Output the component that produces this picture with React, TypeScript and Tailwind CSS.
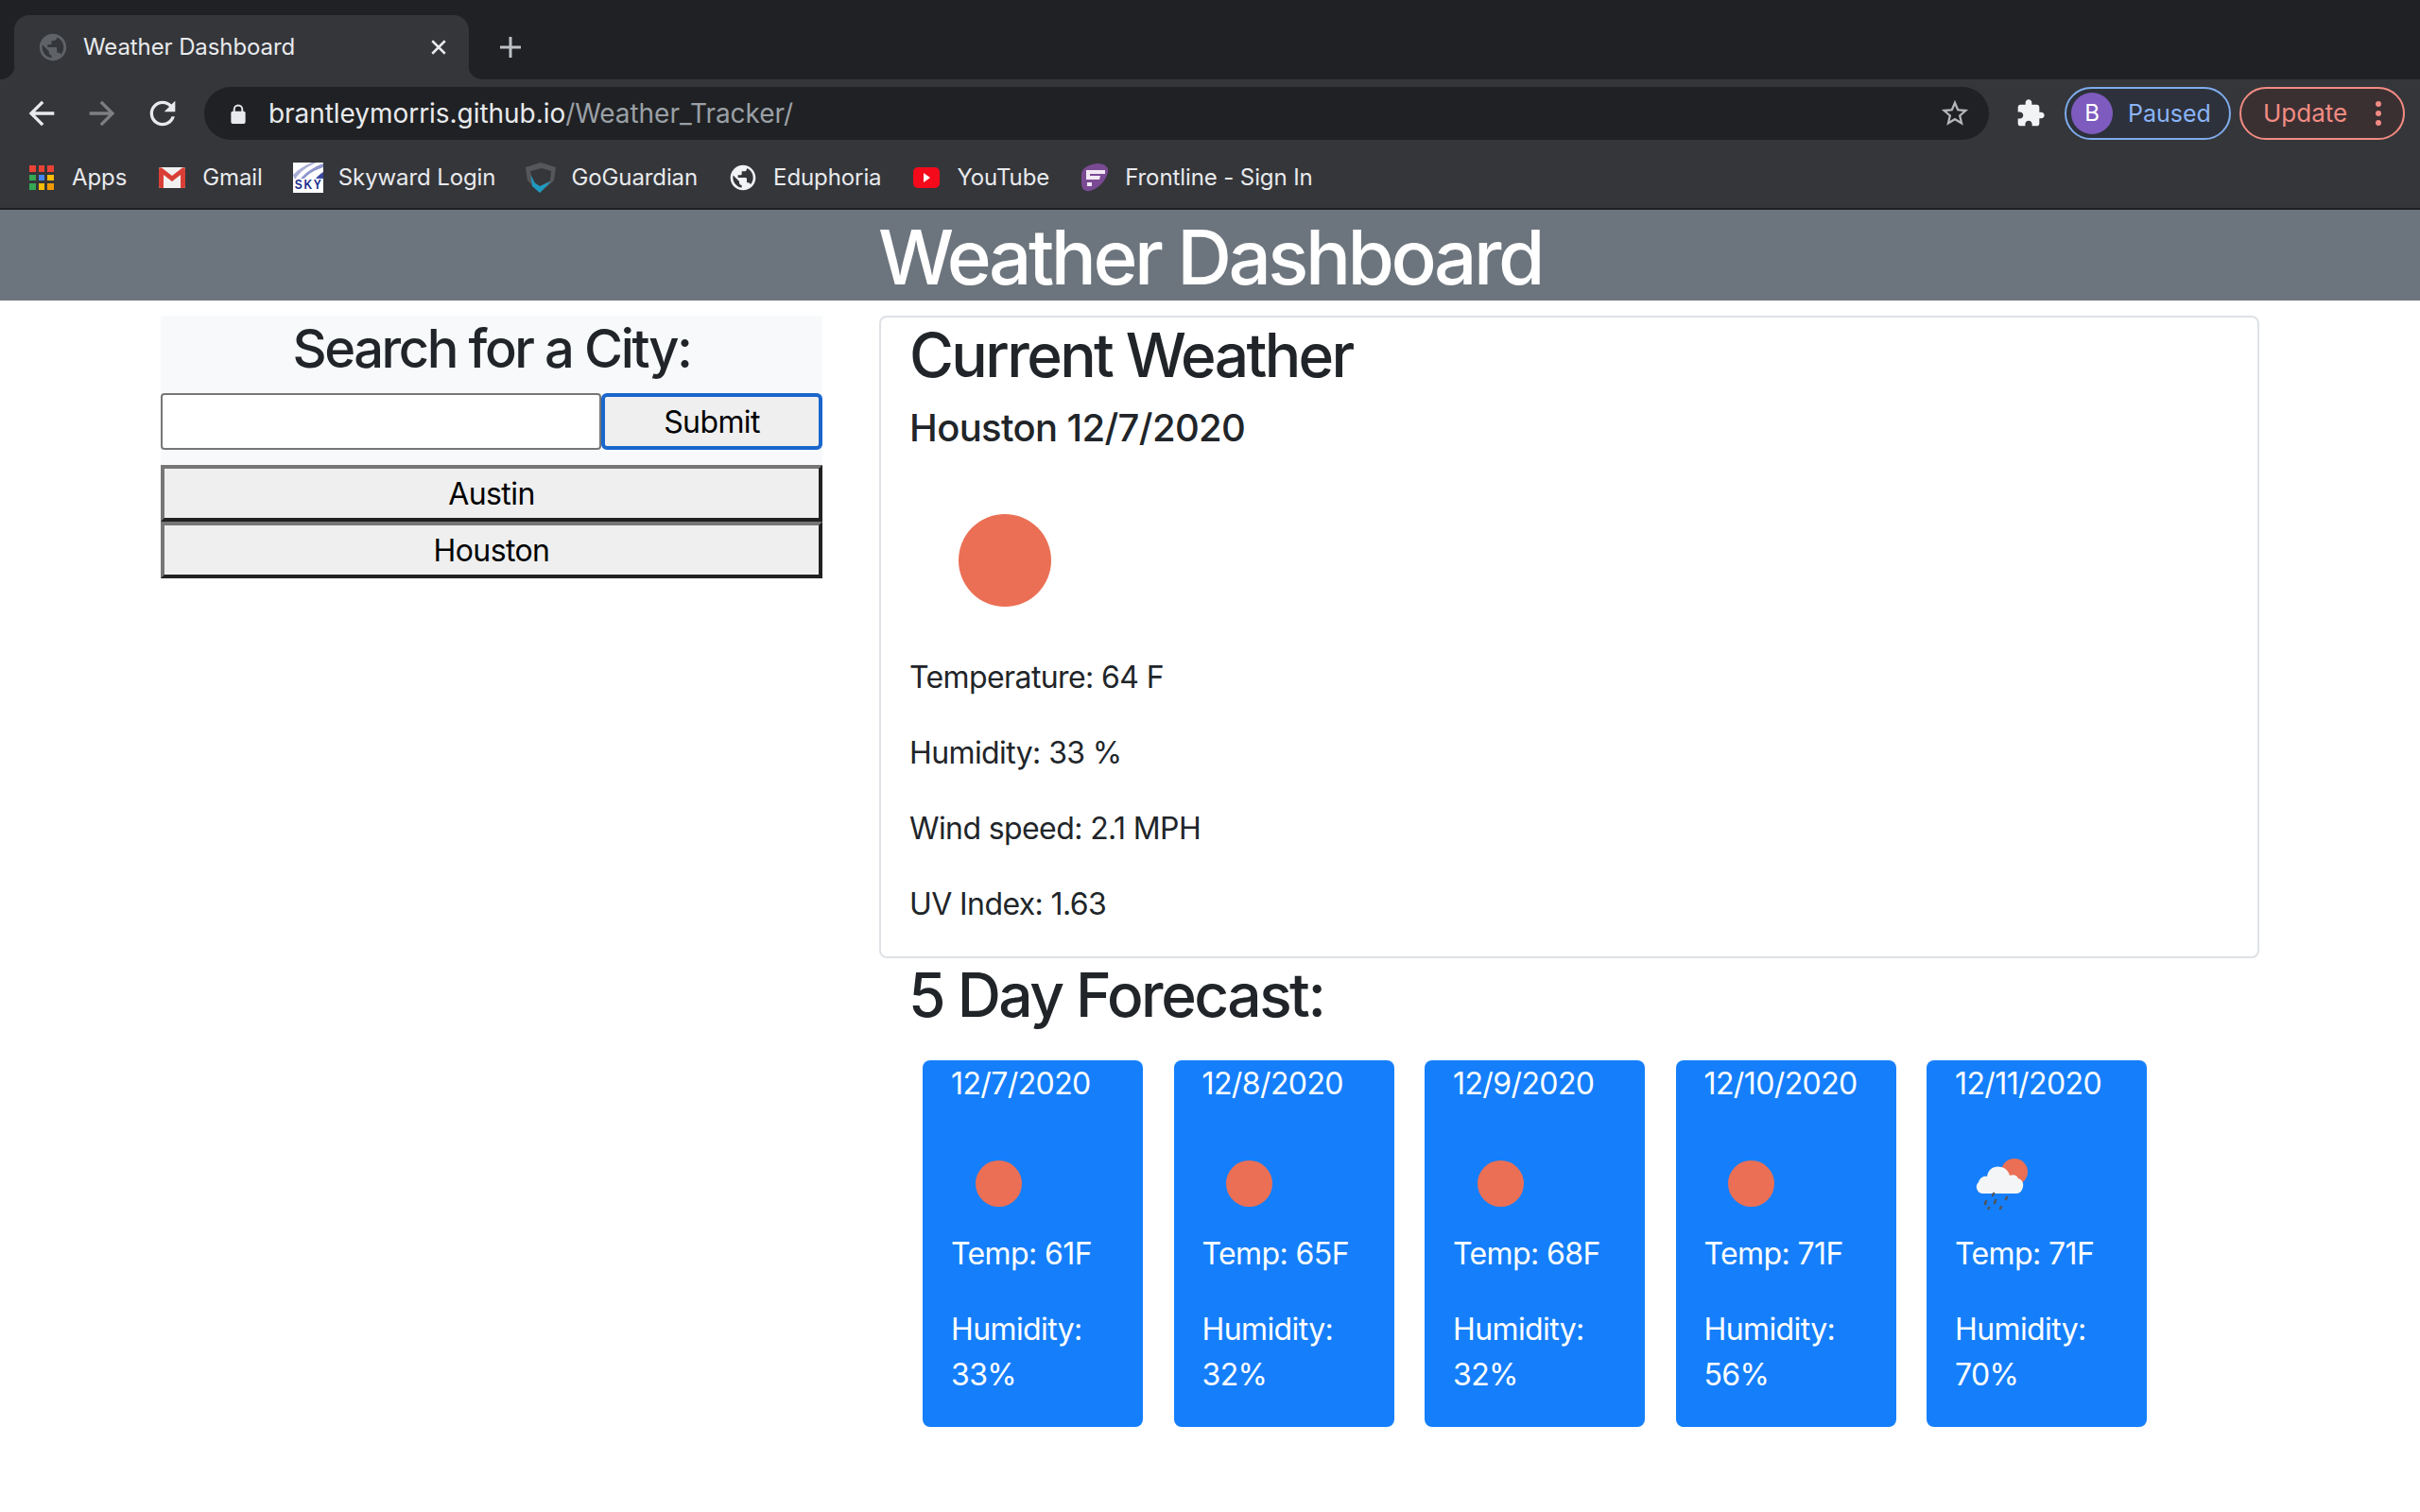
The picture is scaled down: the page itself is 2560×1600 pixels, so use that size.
import type { ReactNode } from 'react'

function MaterialIcon({ d, className }: { d: string; className: string }) {
  return (
    <svg viewBox="0 0 24 24" fill="currentColor" className={className}>
      <path d={d} />
    </svg>
  )
}

const GLOBE =
  'M12 2C6.48 2 2 6.48 2 12s4.48 10 10 10 10-4.48 10-10S17.52 2 12 2zm-1 17.93c-3.95-.49-7-3.85-7-7.93 0-.62.08-1.21.21-1.79L9 15v1c0 1.1.9 2 2 2v1.93zm6.9-2.54c-.26-.81-1-1.39-1.9-1.39h-1v-3c0-.55-.45-1-1-1H8v-2h2c.55 0 1-.45 1-1V7h2c1.1 0 2-.9 2-2v-.41c2.93 1.19 5 4.06 5 7.41 0 2.08-.8 3.97-2.1 5.39z'
const ARROW = 'M20 11H7.83l5.59-5.59L12 4l-8 8 8 8 1.41-1.41L7.83 13H20v-2z'
const RELOAD =
  'M17.65 6.35C16.2 4.9 14.21 4 12 4c-4.42 0-7.99 3.58-7.99 8s3.57 8 7.99 8c3.73 0 6.84-2.55 7.73-6h-2.08c-.82 2.33-3.04 4-5.65 4-3.31 0-6-2.69-6-6s2.69-6 6-6c1.66 0 3.14.69 4.22 1.78L13 11h7V4l-2.35 2.35z'
const STAR =
  'M22 9.24l-7.19-.62L12 2 9.19 8.63 2 9.24l5.46 4.73L5.82 21 12 17.27 18.18 21l-1.63-7.03L22 9.24zM12 15.4l-3.76 2.27 1-4.28-3.32-2.88 4.38-.38L12 6.1l1.71 4.04 4.38.38-3.32 2.88 1 4.28L12 15.4z'
const PUZZLE =
  'M20.5 11H19V7c0-1.1-.9-2-2-2h-4V3.5C13 2.12 11.88 1 10.5 1S8 2.12 8 3.5V5H4c-1.1 0-1.99.9-1.99 2v3.8H3.5c1.49 0 2.7 1.21 2.7 2.7s-1.21 2.7-2.7 2.7H2V20c0 1.1.9 2 2 2h3.8v-1.5c0-1.49 1.21-2.7 2.7-2.7 1.49 0 2.7 1.21 2.7 2.7V22H17c1.1 0 2-.9 2-2v-4h1.5c1.38 0 2.5-1.12 2.5-2.5S21.88 11 20.5 11z'

function AppsIcon() {
  const colors = ['#ea4335', '#ea4335', '#ea4335', '#34a853', '#4285f4', '#fbbc04', '#34a853', '#fbbc04', '#f29900']
  return (
    <div className="grid grid-cols-3 gap-[3px] w-[26px] h-[26px]">
      {colors.map((c, i) => (
        <span key={i} className="w-[6.6px] h-[6.6px]" style={{ backgroundColor: c }} />
      ))}
    </div>
  )
}

function GmailIcon() {
  return (
    <svg viewBox="0 0 28 22" className="w-[28px] h-[22px]">
      <rect width="28" height="22" rx="2" fill="#f1f1f1" />
      <path d="M0 2v18a2 2 0 0 0 2 2h3V8l9 7 9-7v14h3a2 2 0 0 0 2-2V2a2 2 0 0 0-3-1.5L14 9 3 .5A2 2 0 0 0 0 2z" fill="#d93f36" />
    </svg>
  )
}

function SkywardIcon() {
  return (
    <div className="relative w-[32px] h-[32px] bg-white overflow-hidden">
      <svg viewBox="0 0 32 32" className="absolute inset-0 w-full h-full">
        <path d="M0 13C6 7 12 3 20 0h5C15 4 7 10 2 18z" fill="#a9aed8" />
        <path d="M8 17C13 11 21 5 32 1v4C23 8 16 12 12 17z" fill="#8f96cc" />
        <path d="M24 17c2-3 5-5 8-7v7z" fill="#3b4aa3" />
      </svg>
      <div className="absolute bottom-0 left-0 right-0 flex justify-between px-[2px] font-[family-name:'Liberation_Sans',sans-serif] text-[12px] leading-[14px] font-bold text-[#1f2f8f] scale-y-125 origin-bottom">
        <span>S</span>
        <span>K</span>
        <span>Y</span>
      </div>
    </div>
  )
}

function GoGuardianIcon() {
  return (
    <svg viewBox="0 0 32 32" className="w-[32px] h-[32px]">
      <path d="M0 5 16 0l16 5-2 14-15 13L2 19z" fill="#55575b" />
      <path d="M5 9 17 6l10 3-1 10-11 6-8-6z" fill="#35363a" />
      <path d="M5.5 13 10 22l5 3 12-5-12 12-8-7z" fill="#1f9ac0" />
    </svg>
  )
}

function YouTubeIcon() {
  return (
    <div className="flex items-center justify-center w-[28px] h-[22px] rounded-[5px] bg-[#f40a1a]">
      <span className="w-0 h-0 border-y-[5px] border-y-transparent border-l-[7px] border-l-white" />
    </div>
  )
}

function FrontlineIcon() {
  return (
    <svg viewBox="0 0 30 30" className="w-[30px] h-[30px]">
      <path d="M1 12C1 4 9 1 18 0c8 0 12 4 11 9-2 9-9 17-19 20-6 1-9-2-9-9z" fill="#7a4a93" />
      <path d="M6 7h20v4H10v2h11l-1 4H6z" fill="#f2e9f5" />
      <rect x="7" y="20" width="5" height="4" fill="#f2e9f5" />
    </svg>
  )
}

function Bookmark({ icon, label }: { icon: ReactNode; label: string }) {
  return (
    <div className="flex items-center gap-[16px]">
      <div className="flex items-center justify-center w-[32px] h-[32px]">{icon}</div>
      <span className="text-[24px] leading-[32px] tracking-[-0.1px] text-[#e8eaed] whitespace-nowrap">{label}</span>
    </div>
  )
}

function BrowserChrome() {
  return (
    <div className="bg-[#35363a]">
      <div className="flex items-end h-[84px] pl-[15px] bg-[#202124]">
        <div className="relative flex items-center w-[481px] h-[68px] pl-[27px] pr-[24px] rounded-t-[16px] bg-[#35363a]">
          <svg viewBox="0 0 16 16" className="absolute bottom-0 -left-[15px] w-[16px] h-[16px]">
            <path d="M16 0v16H0c9 0 16-7 16-16z" fill="#35363a" />
          </svg>
          <svg viewBox="0 0 16 16" className="absolute bottom-0 -right-[15px] w-[16px] h-[16px]">
            <path d="M0 0v16h16C7 16 0 9 0 0z" fill="#35363a" />
          </svg>
          <MaterialIcon d={GLOBE} className="w-[34px] h-[34px] -ml-[3px] text-[#5f6368]" />
          <span className="ml-[15px] text-[24px] leading-[32px] tracking-[-0.1px] text-[#e8eaed] whitespace-nowrap">Weather Dashboard</span>
          <svg viewBox="0 0 16 16" className="ml-auto -mr-[1px] w-[18px] h-[18px]" stroke="#e8eaed" strokeWidth="2.2">
            <path d="M2 2l12 12M14 2 2 14" />
          </svg>
        </div>
        <svg viewBox="0 0 22 22" className="ml-[33px] mb-[23px] w-[22px] h-[22px]" stroke="#bdc1c6" strokeWidth="3">
          <path d="M11 0v22M0 11h22" />
        </svg>
      </div>
      <div className="flex items-start h-[72px] pt-[8px]">
        <div className="flex items-center w-[216px] h-[56px] pl-[24px] gap-[24px] text-[#e8eaed]">
          <MaterialIcon d={ARROW} className="w-[40px] h-[40px]" />
          <MaterialIcon d={ARROW} className="w-[40px] h-[40px] text-[#7d7f83] rotate-180" />
          <MaterialIcon d={RELOAD} className="w-[40px] h-[40px]" />
        </div>
        <div className="flex items-center w-[1888px] h-[56px] pl-[28px] pr-[19px] rounded-full bg-[#202124]">
          <svg viewBox="0 0 16 22" className="w-[16px] h-[21px]">
            <path d="M3.5 9V6a4.5 4.5 0 0 1 9 0v3" fill="none" stroke="#e8eaed" strokeWidth="2" />
            <rect y="8" width="16" height="14" rx="2" fill="#e8eaed" />
          </svg>
          <span className="ml-[24px] text-[28px] leading-[36px] tracking-[-0.05px] whitespace-nowrap text-[#e8eaed]">
            brantleymorris.github.io<span className="text-[#9aa0a6]">/Weather_Tracker/</span>
          </span>
          <MaterialIcon d={STAR} className="ml-auto w-[34px] h-[34px] text-[#b4b6b8]" />
        </div>
        <div className="flex items-center h-[56px]">
          <MaterialIcon d={PUZZLE} className="ml-[28px] w-[32px] h-[32px] text-[#f1f3f4]" />
        </div>
        <div className="flex items-center ml-[20px] w-[176px] h-[56px] pl-[5px] rounded-full border-2 border-[#7facec] bg-[#2d313b]">
          <div className="flex items-center justify-center w-[44px] h-[44px] rounded-full bg-[#7e5bbe] text-[24px] text-white">B</div>
          <span className="ml-[16px] text-[25px] leading-[32px] text-[#8ab4f8]">Paused</span>
        </div>
        <div className="flex items-center ml-[9px] w-[175px] h-[56px] pl-[23px] rounded-full border-2 border-[#f28b82] bg-[#3a3032]">
          <span className="text-[26px] leading-[32px] text-[#f28b82]">Update</span>
          <div className="flex flex-col gap-[4px] ml-[30px]">
            <span className="w-[6px] h-[6px] rounded-full bg-[#f28b82]" />
            <span className="w-[6px] h-[6px] rounded-full bg-[#f28b82]" />
            <span className="w-[6px] h-[6px] rounded-full bg-[#f28b82]" />
          </div>
        </div>
      </div>
      <div className="flex items-center gap-[32px] h-[64px] pl-[28px]">
        <Bookmark icon={<AppsIcon />} label="Apps" />
        <Bookmark icon={<GmailIcon />} label="Gmail" />
        <Bookmark icon={<SkywardIcon />} label="Skyward Login" />
        <Bookmark icon={<GoGuardianIcon />} label="GoGuardian" />
        <Bookmark icon={<MaterialIcon d={GLOBE} className="w-[34px] h-[34px] text-[#f1f3f4]" />} label="Eduphoria" />
        <Bookmark icon={<YouTubeIcon />} label="YouTube" />
        <Bookmark icon={<FrontlineIcon />} label="Frontline - Sign In" />
      </div>
      <div className="h-[2px] bg-[#202124]" />
    </div>
  )
}

function SunImage({ className }: { className: string }) {
  return (
    <div className={`flex items-center justify-center ${className}`}>
      <div className="w-[49%] h-[49%] rounded-full bg-[#eb6f54]" />
    </div>
  )
}

function RainImage() {
  return (
    <svg viewBox="0 0 100 100" className="w-[100px] h-[100px]">
      <circle cx="63" cy="38" r="14" fill="#eb6f54" />
      <path d="M29 61a7 7 0 0 1-4-12c1-4 5-7 9-6 1-8 8-12 15-10 5 1 8 5 9 9 4-2 8 0 9 3 4 1 6 5 5 9-1 4-3 7-7 7z" fill="#f4f5f6" />
      <g stroke="#4d5560" strokeWidth="2.6" strokeLinecap="round">
        <path d="M41 61l-1 2M33 69l-1 3M43 68l-1 3M55 65l-1 2M36 76l-.5 1M49 75l-1 2" />
      </g>
    </svg>
  )
}

function ForecastCard({ date, temp, humidity, rain }: { date: string; temp: string; humidity: string; rain?: boolean }) {
  return (
    <div className="w-[233px] h-[388px] pt-px px-[30px] rounded-[8px] bg-[#157ffb] text-[32px] leading-[48px] tracking-[-0.6px] text-white">
      <p className="mb-[31px] whitespace-nowrap">{date}</p>
      {rain ? <RainImage /> : <SunImage className="w-[100px] h-[100px]" />}
      <p className="mt-px mb-[32px] whitespace-nowrap">Temp: {temp}</p>
      <p>Humidity: {humidity}</p>
    </div>
  )
}

const FORECAST = [
  { date: '12/7/2020', temp: '61F', humidity: '33%' },
  { date: '12/8/2020', temp: '65F', humidity: '32%' },
  { date: '12/9/2020', temp: '68F', humidity: '32%' },
  { date: '12/10/2020', temp: '71F', humidity: '56%' },
  { date: '12/11/2020', temp: '71F', humidity: '70%', rain: true },
]

export default function App() {
  return (
    <div className="min-h-screen bg-white font-[family-name:Inter,sans-serif] text-[#212529]">
      <BrowserChrome />
      <header className="h-[96px] pt-[2px] bg-[#6c757d] text-center text-[80px] leading-[96px] tracking-[-3.5px] font-medium text-white">
        Weather Dashboard
      </header>
      <main className="flex gap-[60px] px-[170px] pt-[16px]">
        <aside className="w-[700px] shrink-0">
          <div className="h-[158px] pt-[2px] bg-[#f8f9fa]">
            <h3 className="mb-[13px] text-center text-[56px] leading-[67px] tracking-[-2.4px] font-medium">Search for a City:</h3>
            <div className="flex h-[60px]">
              <input className="w-[466px] rounded-[4px] border-2 border-[#767676] bg-white" />
              <button className="w-[234px] pt-[2px] rounded-[6px] border-4 border-[#1a66cc] bg-[#efefef] text-[32px] tracking-[-0.6px] text-black">Submit</button>
            </div>
          </div>
          <button className="block w-full h-[60px] pt-[2px] border-4 border-t-[#767676] border-l-[#767676] border-r-[#212121] border-b-[#212121] bg-[#efefef] text-[32px] tracking-[-0.6px] text-black">Austin</button>
          <button className="block w-full h-[60px] pt-[2px] border-4 border-t-[#767676] border-l-[#767676] border-r-[#212121] border-b-[#212121] bg-[#efefef] text-[32px] tracking-[-0.6px] text-black">Houston</button>
        </aside>
        <section className="flex-1 min-w-0">
          <div className="h-[680px] pt-px px-[30px] rounded-[8px] border-2 border-[#dee2e6] text-[32px] leading-[48px] tracking-[-0.6px]">
            <h2 className="mb-[15px] text-[64px] leading-[77px] tracking-[-2.6px] font-medium">Current Weather</h2>
            <h5 className="mb-[16px] text-[40px] leading-[48px] tracking-[-0.65px] font-medium">Houston 12/7/2020</h5>
            <SunImage className="ml-px w-[200px] h-[200px]" />
            <p className="mb-[32px]">Temperature: 64 F</p>
            <p className="mb-[32px]">Humidity: 33 %</p>
            <p className="mb-[32px]">Wind speed: 2.1 MPH</p>
            <p>UV Index: 1.63</p>
          </div>
          <h2 className="mb-[31px] pl-[31px] text-[64px] leading-[77px] tracking-[-2.5px] font-medium">5 Day Forecast:</h2>
          <div className="flex gap-[32.5px] pl-[46px]">
            {FORECAST.map((day) => (
              <ForecastCard key={day.date} {...day} />
            ))}
          </div>
        </section>
      </main>
    </div>
  )
}
